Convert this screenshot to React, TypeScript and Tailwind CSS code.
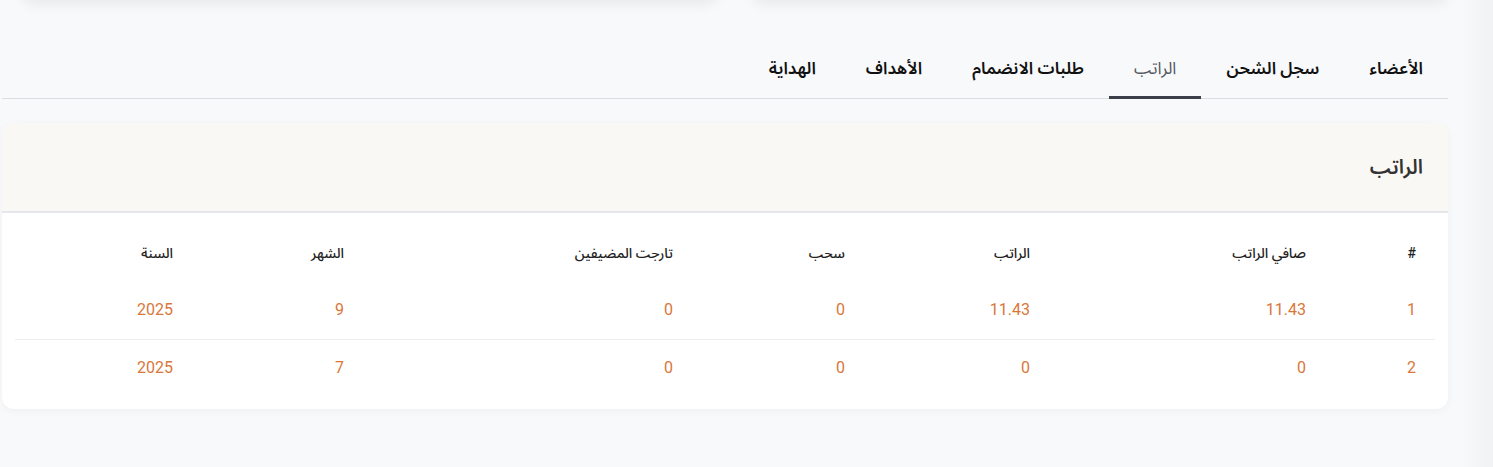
const tabs = [
  { label: 'الأعضاء', active: false },
  { label: 'سجل الشحن', active: false },
  { label: 'الراتب', active: true },
  { label: 'طلبات الانضمام', active: false },
  { label: 'الأهداف', active: false },
  { label: 'الهداية', active: false },
];

const columns = [
  { label: '#', width: 'w-[110px]' },
  { label: 'صافي الراتب', width: 'w-[276px]' },
  { label: 'الراتب', width: 'w-[185px]' },
  { label: 'سحب', width: 'w-[172px]' },
  { label: 'تارجت المضيفين', width: 'w-[329px]' },
  { label: 'الشهر', width: 'w-[171px]' },
  { label: 'السنة', width: '' },
];

const rows = [
  ['1', '11.43', '11.43', '0', '0', '9', '2025'],
  ['2', '0', '0', '0', '0', '7', '2025'],
];

export default function App() {
  return (
    <div
      className="flex h-[467px] overflow-hidden bg-[#f8f9fb]"
      style={{ fontFamily: 'Roboto, "Noto Sans Arabic", "DejaVu Sans", sans-serif' }}
    >
      <div className="w-[1465px] pl-[2px] pr-[17px]" dir="rtl">
        {/* bottoms of the cards above */}
        <div className="-mt-[40px] grid grid-cols-2 gap-[34px] pl-[20px]">
          <div className="h-[40px] rounded-xl bg-[#f8f9fb] shadow-[0_4px_14px_rgba(0,0,0,0.07)]" />
          <div className="h-[40px] rounded-xl bg-[#f8f9fb] shadow-[0_4px_14px_rgba(0,0,0,0.07)]" />
        </div>

        <div className="mt-[53px] flex border-b border-[#dcdee2]">
          {tabs.map((tab) => (
            <button
              key={tab.label}
              className={`-mb-px h-[46px] border-b-[3px] px-[25px] pb-[11px] text-[17px] ${
                tab.active
                  ? 'border-[#3a3f4b] font-normal text-[#555a63]'
                  : 'border-transparent font-semibold text-[#111]'
              }`}
            >
              {tab.label}
            </button>
          ))}
        </div>

        <div className="mt-[24px] overflow-hidden rounded-xl bg-white shadow-[0_2px_10px_rgba(0,0,0,0.04)]">
          <div className="flex h-[90px] items-center border-b-2 border-[#e6e7ea] bg-[#faf8f5] px-[25px]">
            <h2 className="text-[20px] font-semibold text-[#333]">الراتب</h2>
          </div>
          <div className="px-[13px] pt-[12px] pb-[12px]">
            <table className="w-full border-collapse">
              <thead>
                <tr>
                  {columns.map((col) => (
                    <th
                      key={col.label}
                      className={`${col.width} h-[56px] px-[19px] text-right text-[14px] font-medium text-[#222]`}
                    >
                      {col.label}
                    </th>
                  ))}
                </tr>
              </thead>
              <tbody>
                {rows.map((row, i) => (
                  <tr key={i} className="border-b border-[#eceef1] last:border-0">
                    {row.map((cell, j) => (
                      <td
                        key={j}
                        className="h-[58px] px-[19px] text-right text-[16px] font-normal text-[#d9773a]"
                      >
                        {cell}
                      </td>
                    ))}
                  </tr>
                ))}
              </tbody>
            </table>
          </div>
        </div>
      </div>
      <div className="flex-1 bg-gradient-to-r from-[#f7f8fa] to-[#f1f2f4]" />
    </div>
  );
}
